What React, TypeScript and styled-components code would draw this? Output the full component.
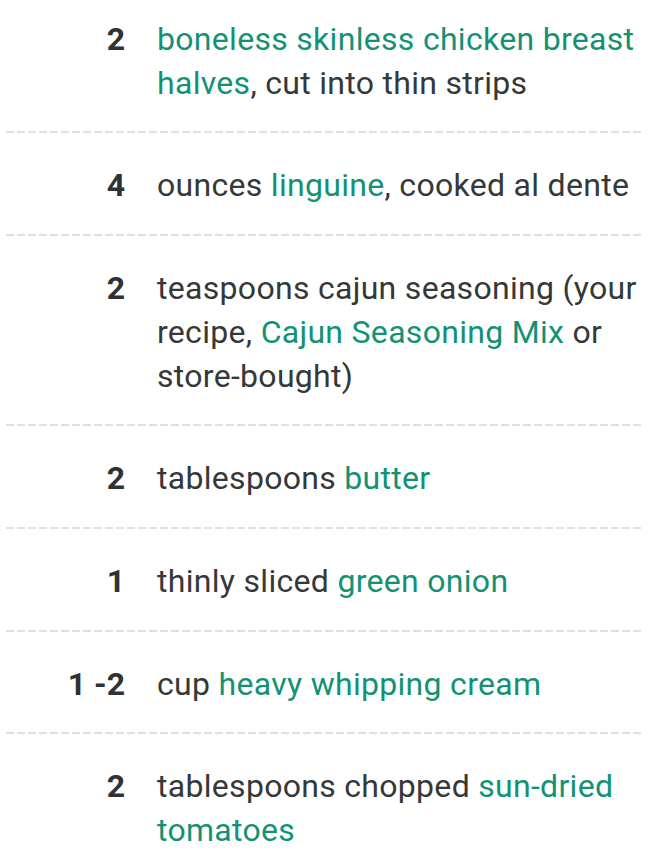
import styled, { createGlobalStyle } from "styled-components";

const GlobalStyle = createGlobalStyle`
  body {
    margin: 0;
    background: #ffffff;
    font-family: Roboto, "Liberation Sans", sans-serif;
    overflow: hidden;
  }
`;

const List = styled.ul`
  list-style: none;
  margin: -13px 0 0 0;
  padding: 0 24px 0 6px;
`;

const Row = styled.li`
  display: grid;
  grid-template-columns: 119px 1fr;
  column-gap: 32px;
  padding: 31px 0 28px;
  background-image: linear-gradient(to right, #e2e0d8 8px, transparent 8px);
  background-size: 11px 2px;
  background-repeat: repeat-x;
  background-position: left bottom;
  &:last-child {
    background: none;
  }
`;

const Qty = styled.span`
  text-align: right;
  font-size: 32px;
  line-height: 43.7px;
  font-weight: 700;
  color: #2f3233;
`;

const Text = styled.span`
  font-size: 32px;
  line-height: 43.7px;
  letter-spacing: 0.3px;
  color: #353839;
  a {
    color: #139273;
    text-decoration: none;
  }
`;

interface IIngredient {
  qty: string;
  text: (string | { link: string })[];
}

const ingredients: IIngredient[] = [
  { qty: "2", text: [{ link: "boneless skinless chicken breast halves" }, ", cut into thin strips"] },
  { qty: "4", text: ["ounces ", { link: "linguine" }, ", cooked al dente"] },
  {
    qty: "2",
    text: ["teaspoons cajun seasoning (your recipe, ", { link: "Cajun Seasoning Mix" }, " or store-bought)"],
  },
  { qty: "2", text: ["tablespoons ", { link: "butter" }] },
  { qty: "1", text: ["thinly sliced ", { link: "green onion" }] },
  { qty: "1 -2", text: ["cup ", { link: "heavy whipping cream" }] },
  { qty: "2", text: ["tablespoons chopped ", { link: "sun-dried tomatoes" }] },
];

export default function App() {
  return (
    <>
      <GlobalStyle />
      <List>
        {ingredients.map((item, i) => (
          <Row key={i}>
            <Qty>{item.qty}</Qty>
            <Text>
              {item.text.map((part, j) =>
                typeof part === "string" ? part : <a key={j} href="#">{part.link}</a>
              )}
            </Text>
          </Row>
        ))}
      </List>
    </>
  );
}
